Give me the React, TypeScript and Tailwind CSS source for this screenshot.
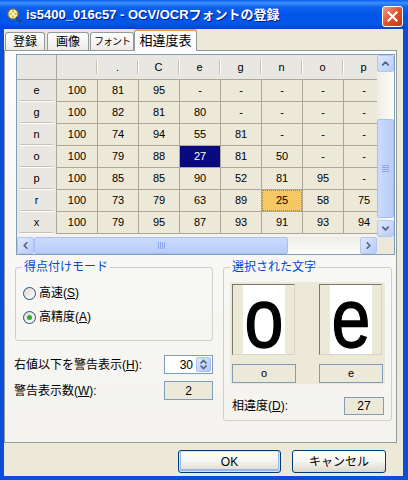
import { ChevronUp, ChevronDown, ChevronLeft, ChevronRight } from "lucide-react";

type Row = { label: string; values: string[] };

const columns = ["", ".", "C", "e", "g", "n", "o", "p"];

const rows: Row[] = [
  { label: "e", values: ["100", "81", "95", "-", "-", "-", "-", "-"] },
  { label: "g", values: ["100", "82", "81", "80", "-", "-", "-", "-"] },
  { label: "n", values: ["100", "74", "94", "55", "81", "-", "-", "-"] },
  { label: "o", values: ["100", "79", "88", "27", "81", "50", "-", "-"] },
  { label: "p", values: ["100", "85", "85", "90", "52", "81", "95", "-"] },
  { label: "r", values: ["100", "73", "79", "63", "89", "25", "58", "75"] },
  { label: "x", values: ["100", "79", "95", "87", "93", "91", "93", "94"] },
];

function ScrollButton({ children }: { children: React.ReactNode }) {
  return (
    <div className="w-[17px] h-[17px] shrink-0 rounded-[2px] border border-[#b5c7f1] bg-linear-to-br from-[#dfe8fe] to-[#b7cbf7] flex items-center justify-center text-[#4d6185]">
      {children}
    </div>
  );
}

function Radio({ checked }: { checked?: boolean }) {
  return (
    <span className="w-[13px] h-[13px] shrink-0 rounded-full border border-[#1c5180] bg-linear-to-br from-[#dcd9cf] to-white flex items-center justify-center">
      {checked && <span className="w-[5px] h-[5px] rounded-full bg-[#2bb02b]" />}
    </span>
  );
}

function Cell({ value, r, c }: { value: string; r: number; c: number }) {
  if (r === 3 && c === 3) {
    return (
      <div className="h-[22px] border-r border-b border-[#aca899] bg-[#0a0a80] text-white flex items-center justify-center">
        {value}
      </div>
    );
  }
  if (r === 5 && c === 5) {
    return (
      <div className="h-[22px] border-r border-b border-[#aca899] bg-[#f5c864]">
        <div className="h-full w-full border border-dotted border-[#9a8a50] flex items-center justify-center">
          {value}
        </div>
      </div>
    );
  }
  return (
    <div className="h-[22px] border-r border-b border-[#aca899] bg-[#ece9d8] flex items-center justify-center">
      {value}
    </div>
  );
}

function Grid() {
  return (
    <div className="w-[379px] h-[201px] border border-[#7f9db9] flex flex-col font-['Liberation_Sans',sans-serif] text-[11px] text-black">
      <div className="flex">
        <div className="w-[360px] h-[182px] overflow-hidden bg-[#f4f3ee]">
          <div className="grid grid-cols-[40px_repeat(8,41px)] w-max">
            <div className="h-[25px] border-r border-b border-[#aca899] bg-[#e8e7e1]" />
            {columns.map((c, i) => (
              <div
                key={i}
                className="h-[25px] border-b border-[#aca899] bg-[#e8e7e1] flex items-center"
              >
                <span className="flex-1 text-center">{c}</span>
                <span className="w-[2px] h-[14px] border-l border-[#c5c2b2] border-r border-r-white" />
              </div>
            ))}
            {rows.map((row, r) => (
              <div key={row.label} className="contents">
                <div className="h-[22px] border-r border-[#aca899] bg-[#e8e7e1] flex flex-col">
                  <span className="flex-1 flex items-center justify-center">{row.label}</span>
                  <span className="h-[2px] mx-[3px] border-t border-[#c5c2b2] border-b border-b-white" />
                </div>
                {row.values.map((v, c) => (
                  <Cell key={c} value={v} r={r} c={c} />
                ))}
              </div>
            ))}
          </div>
        </div>
        <div className="w-[17px] h-[182px] flex flex-col bg-linear-to-r from-[#eeede5] to-[#fdfdfa]">
          <ScrollButton>
            <ChevronUp size={11} strokeWidth={3.5} />
          </ScrollButton>
          <div className="h-[47px]" />
          <div className="h-[99px] rounded-[2px] border border-[#a9bff3] bg-linear-to-r from-[#cbdafd] to-[#b9ccf8] flex flex-col items-center justify-center gap-[1px]">
            {[0, 1, 2, 3].map((i) => (
              <span key={i} className="w-[7px] h-[1px] bg-[#eef3fe] border-b border-[#8aa6e8]" />
            ))}
          </div>
          <div className="flex-1" />
          <ScrollButton>
            <ChevronDown size={11} strokeWidth={3.5} />
          </ScrollButton>
        </div>
      </div>
      <div className="flex">
        <div className="w-[360px] h-[17px] flex bg-linear-to-b from-[#eeede5] to-[#fdfdfa]">
          <ScrollButton>
            <ChevronLeft size={11} strokeWidth={3.5} />
          </ScrollButton>
          <div className="w-[254px] rounded-[2px] border border-[#a9bff3] bg-linear-to-b from-[#cbdafd] to-[#b9ccf8] flex items-center justify-center gap-[1px]">
            {[0, 1, 2, 3].map((i) => (
              <span key={i} className="h-[7px] w-[1px] bg-[#eef3fe] border-r border-[#8aa6e8]" />
            ))}
          </div>
          <div className="flex-1" />
          <ScrollButton>
            <ChevronRight size={11} strokeWidth={3.5} />
          </ScrollButton>
        </div>
        <div className="w-[17px] h-[17px] bg-[#ece9d8]" />
      </div>
    </div>
  );
}

function GlyphBox({ ch }: { ch: string }) {
  return (
    <div className="w-[63px] h-[71px] border border-[#7a7869] border-r-[#d8d5c6] border-b-[#d8d5c6] bg-[#ece9d8] pl-[10px]">
      <div className="w-[42px] h-full bg-white overflow-hidden flex items-end justify-center">
        <span className="font-['Liberation_Sans',sans-serif] text-[70px] leading-none mb-[-6px] scale-y-[1.18] origin-bottom text-black [-webkit-text-stroke:1.2px_black]">
          {ch}
        </span>
      </div>
    </div>
  );
}

export default function App() {
  return (
    <div className="w-[408px] h-[480px] bg-[#0b4fd9] flex flex-col font-['Liberation_Sans','Noto_Sans_CJK_JP',sans-serif] overflow-hidden">
      {/* TITLE BAR */}
      <div className="h-[29px] shrink-0 flex items-center bg-[linear-gradient(to_bottom,#0a5ff0_0%,#3d8ffb_10%,#0d61ec_25%,#0055e5_55%,#0157e8_80%,#0344cb_100%)] pl-[6px] pr-[5px]">
        <svg width="16" height="16" viewBox="0 0 16 16" className="shrink-0">
          <circle cx="7" cy="7" r="5.2" fill="#fff4a0" stroke="#6a6a5a" strokeWidth="1.3" />
          <path d="M7 3.5v7M3.5 7h7" stroke="#d49a10" strokeWidth="1.6" />
          <circle cx="7" cy="7" r="1.6" fill="#ffffff" />
          <path d="M11 11l3.6 3.6" stroke="#2c3f8c" strokeWidth="2.6" strokeLinecap="round" />
        </svg>
        <span className="ml-[4px] text-white font-bold text-[13px] leading-none [text-shadow:1px_1px_#0a1a80] whitespace-nowrap">
          is5400_016c57 - OCV/OCRフォントの登録
        </span>
        <div className="flex-1" />
        <div className="w-[21px] h-[21px] mt-[3px] rounded-[3px] border border-white bg-linear-to-br from-[#ee9a80] via-[#e0522e] to-[#c23a14] flex items-center justify-center">
          <svg width="11" height="11" viewBox="0 0 11 11">
            <path d="M1.5 1.5l8 8M9.5 1.5l-8 8" stroke="white" strokeWidth="2.2" strokeLinecap="square" />
          </svg>
        </div>
      </div>

      {/* BODY */}
      <div className="ml-[4px] mr-[5px] mb-[4px] flex-1 bg-[#ece9d8] flex flex-col">
        {/* TABS */}
        <div className="h-[21px] flex items-end pl-[1px] text-[12px] text-black">
          <div className="w-[40px] h-[18px] border border-b-0 border-[#919b9c] rounded-t-[3px] bg-linear-to-b from-white to-[#ecebe6] flex items-center justify-center">
            登録
          </div>
          <div className="w-[42px] h-[18px] ml-[2px] border border-b-0 border-[#919b9c] rounded-t-[3px] bg-linear-to-b from-white to-[#ecebe6] flex items-center justify-center">
            画像
          </div>
          <div className="w-[44px] h-[18px] ml-[1px] border border-b-0 border-[#919b9c] rounded-t-[3px] bg-linear-to-b from-white to-[#ecebe6] flex items-center justify-center text-[10px] tracking-[-1px] whitespace-nowrap">
            フォント
          </div>
          <div className="relative z-10 w-[63px] h-[22px] mb-[-1px] border-x border-[#919b9c] border-t-2 border-t-[#f0a030] rounded-t-[3px] bg-[#fcfcfe] flex items-center justify-center text-[13px]">
            相違度表
          </div>
        </div>

        {/* TAB PANEL */}
        <div className="w-[393px] h-[393px] border border-[#919b9c] bg-linear-to-b from-[#fcfcfe] to-[#f4f3ee] pt-[3px] pl-[11px] text-[12px] text-black">
          <Grid />

          <div className="flex items-start mt-[4px] ml-[-1px]">
            {/* LEFT COLUMN */}
            <div className="w-[198px] flex flex-col">
              <fieldset className="border border-[#d0d0bf] rounded-[3px] px-[6px] pb-[15px]">
                <legend className="px-[2px] leading-[16px] text-[#0046d5]">得点付けモード</legend>
                <div className="mt-[10px] flex items-center gap-[3px] h-[16px] pl-[1px]">
                  <Radio />
                  <span>
                    高速(<u>S</u>)
                  </span>
                </div>
                <div className="mt-[8px] flex items-center gap-[3px] h-[16px] pl-[1px]">
                  <Radio checked />
                  <span>
                    高精度(<u>A</u>)
                  </span>
                </div>
              </fieldset>

              <div className="mt-[14px] flex items-center justify-between">
                <span className="-ml-px">
                  右値以下を警告表示(<u>H</u>):
                </span>
                <div className="w-[49px] h-[19px] border border-[#7f9db9] bg-white flex items-center justify-end pr-px">
                  <span className="font-['Liberation_Sans',sans-serif] pr-[3px]">30</span>
                  <div className="w-[15px] h-[15px] rounded-[2px] border border-[#a9bff3] bg-linear-to-br from-[#dfe8fe] to-[#b2c7f7] flex flex-col items-center justify-center text-[#4d6185]">
                    <svg width="9" height="11" viewBox="0 0 9 11">
                      <path d="M1.5 4.5l3-3 3 3M1.5 6.5l3 3 3-3" fill="none" stroke="#4d6185" strokeWidth="1.6" />
                    </svg>
                  </div>
                </div>
              </div>

              <div className="mt-[7px] flex items-center justify-between">
                <span className="-ml-px">
                  警告表示数(<u>W</u>):
                </span>
                <div className="w-[49px] h-[19px] border border-[#7f9db9] bg-[#ece9d8] flex items-center justify-center font-['Liberation_Sans',sans-serif]">
                  2
                </div>
              </div>
            </div>

            {/* RIGHT GROUP */}
            <fieldset className="ml-[10px] w-[169px] border border-[#d0d0bf] rounded-[3px] px-[6px] pb-[5px]">
              <legend className="px-[2px] leading-[16px] text-[#0046d5]">選択された文字</legend>
              <div className="mt-[7px] h-[102px] bg-[#ece9d8] pl-[2px] pt-[2px] flex gap-[23px]">
                <div className="flex flex-col w-[64px]">
                  <GlyphBox ch="o" />
                  <div className="mt-[9px] h-[19px] border border-[#7f9db9] bg-[#ece9d8] flex items-center justify-center font-['Liberation_Sans',sans-serif] text-[11px]">
                    o
                  </div>
                </div>
                <div className="flex flex-col w-[64px]">
                  <GlyphBox ch="e" />
                  <div className="mt-[9px] h-[19px] border border-[#7f9db9] bg-[#ece9d8] flex items-center justify-center font-['Liberation_Sans',sans-serif] text-[11px]">
                    e
                  </div>
                </div>
              </div>
              <div className="mt-[13px] h-[18px] flex items-center justify-between pl-[2px] pr-px">
                <span>
                  相違度(<u>D</u>):
                </span>
                <div className="w-[40px] h-[18px] border border-[#7f9db9] bg-[#ece9d8] flex items-center justify-center font-['Liberation_Sans',sans-serif]">
                  27
                </div>
              </div>
            </fieldset>
          </div>
        </div>

        {/* BUTTONS */}
        <div className="flex-1 flex justify-end items-start pt-[7px] pr-[17px] gap-[11px] text-[12px] text-black">
          <button className="w-[103px] h-[23px] rounded-[3px] border border-[#003c74] bg-linear-to-b from-white via-[#f4f4f0] to-[#dcd8cc] shadow-[inset_0_0_0_1px_#cee7ff,inset_0_-1px_0_2px_#98b8ea]">
            OK
          </button>
          <button className="w-[94px] h-[23px] rounded-[3px] border border-[#003c74] bg-linear-to-b from-white via-[#f4f4f0] to-[#dcd8cc]">
            キャンセル
          </button>
        </div>
      </div>
    </div>
  );
}
